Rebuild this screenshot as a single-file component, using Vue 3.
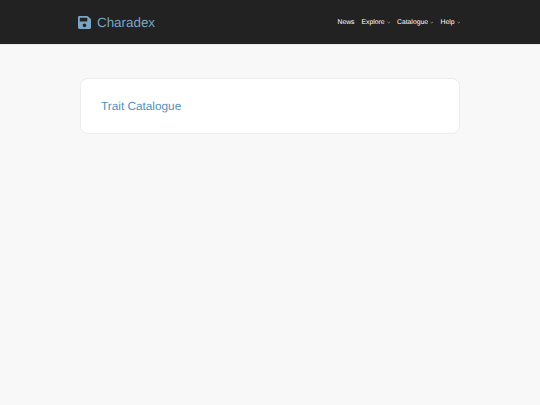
<script setup>
const links = [
  { label: 'News', caret: false },
  { label: 'Explore', caret: true },
  { label: 'Catalogue', caret: true },
  { label: 'Help', caret: true },
]
</script>

<template>
  <div class="page">
    <header class="navbar">
      <div class="nav-inner">
        <a class="brand">
          <svg class="brand-icon" viewBox="0 0 448 512" aria-hidden="true">
            <path d="M433.9 129.9l-83.9-83.9A48 48 0 0 0 316.1 32H48C21.5 32 0 53.5 0 80v352c0 26.5 21.5 48 48 48h352c26.5 0 48-21.5 48-48V163.9a48 48 0 0 0-14.1-34zM224 416c-35.3 0-64-28.7-64-64s28.7-64 64-64 64 28.7 64 64-28.7 64-64 64zm96-304.5V212c0 6.6-5.4 12-12 12H76c-6.6 0-12-5.4-12-12V108c0-6.6 5.4-12 12-12h228.5c3.2 0 6.2 1.3 8.5 3.5l3.5 3.5c2.3 2.3 3.5 5.3 3.5 8.5z" />
          </svg>
          <span>Charadex</span>
        </a>
        <nav class="nav-links">
          <a v-for="link in links" :key="link.label" class="nav-link">
            {{ link.label }}
            <svg v-if="link.caret" class="caret" viewBox="0 0 6 4" aria-hidden="true">
              <path d="M0.8 1 L3 3 L5.2 1" />
            </svg>
          </a>
        </nav>
      </div>
    </header>

    <main class="content">
      <section class="card">
        <h1 class="title">Trait Catalogue</h1>
      </section>
    </main>
  </div>
</template>

<style>
html,
body {
  margin: 0;
  background: #f8f8f8;
}
</style>

<style scoped>
.page {
  min-height: 405px;
  background: #f8f8f8;
  font-family: "Liberation Sans", Arial, sans-serif;
}

.navbar {
  height: 44px;
  background: #222222;
  border-bottom: 1px solid #e9e9e9;
  box-sizing: content-box;
}

.nav-inner {
  width: 380px;
  height: 44px;
  margin: 0 auto;
  display: flex;
  align-items: center;
  justify-content: space-between;
}

.brand {
  display: flex;
  align-items: center;
  gap: 6px;
  margin-left: -2px;
  color: #7aa5c4;
  font-size: 13.4px;
  text-rendering: geometricPrecision;
}

.brand-icon {
  width: 13px;
  height: 15px;
  fill: #7aa5c4;
}

.nav-links {
  display: flex;
  align-items: center;
  gap: 7px;
  text-rendering: geometricPrecision;
}

.nav-link {
  display: flex;
  align-items: center;
  gap: 2px;
  color: #ffffff;
  font-size: 6.8px;
}

.caret {
  width: 3.5px;
  height: 3px;
  fill: none;
  stroke: #d8d8d8;
  stroke-width: 0.8;
}

.content {
  width: 380px;
  margin: 0 auto;
  padding-top: 33px;
}

.card {
  height: 56px;
  padding: 0 20px 1px;
  display: flex;
  align-items: center;
  background: #ffffff;
  border: 1px solid #ececec;
  border-radius: 8px;
  box-sizing: border-box;
}

.title {
  margin: 0;
  color: #4f8fba;
  font-size: 11.8px;
  font-weight: 400;
  text-rendering: geometricPrecision;
}
</style>
